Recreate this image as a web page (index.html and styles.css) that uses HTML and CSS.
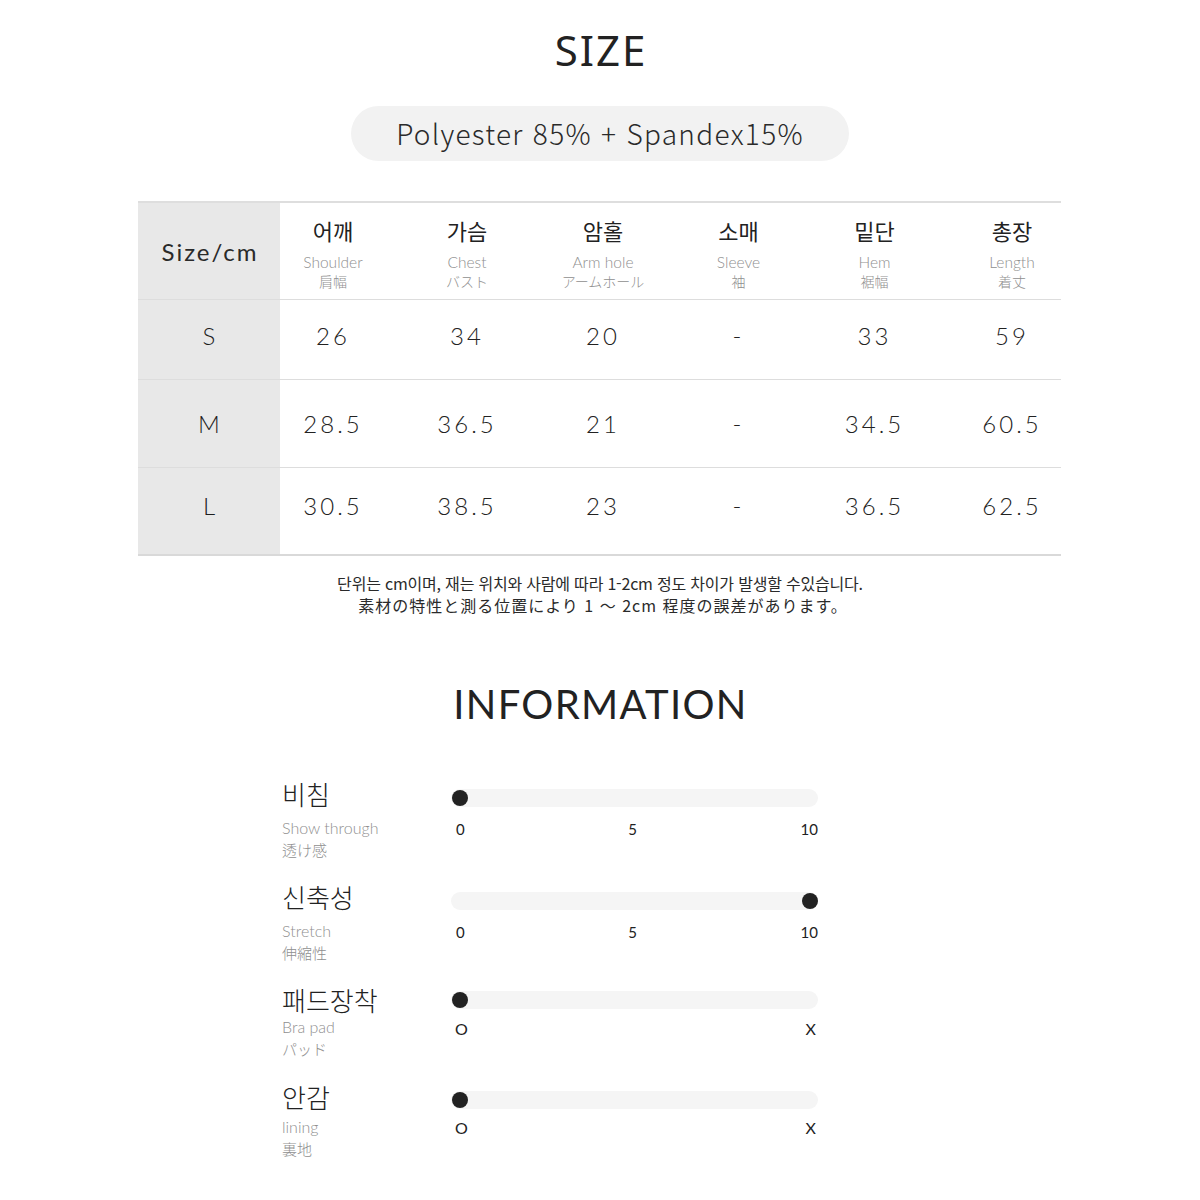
FILE: index.html
```html
<!DOCTYPE html>
<html lang="ko">
<head>
<meta charset="utf-8">
<title>SIZE</title>
<link rel="stylesheet" href="styles.css">
</head>
<body>
<main class="page">
  <section class="size">
    <h1 class="title-size">SIZE</h1>
    <div class="pill-wrap"><div class="pill">Polyester 85% + Spandex15%</div></div>

    <div class="table">
      <div class="row row-head">
        <div class="cell cell-label"><span class="size-cm">Size/cm</span></div>
        <div class="cell head c1"><span class="kr">어깨</span><span class="en">Shoulder</span><span class="jp">肩幅</span></div>
        <div class="cell head"><span class="kr">가슴</span><span class="en">Chest</span><span class="jp">バスト</span></div>
        <div class="cell head"><span class="kr">암홀</span><span class="en">Arm hole</span><span class="jp">アームホール</span></div>
        <div class="cell head"><span class="kr">소매</span><span class="en">Sleeve</span><span class="jp">袖</span></div>
        <div class="cell head"><span class="kr">밑단</span><span class="en">Hem</span><span class="jp">裾幅</span></div>
        <div class="cell head c6"><span class="kr">총장</span><span class="en">Length</span><span class="jp">着丈</span></div>
      </div>
      <div class="row row-s">
        <div class="cell cell-label"><span class="sz">S</span></div>
        <div class="cell num c1">26</div>
        <div class="cell num">34</div>
        <div class="cell num">20</div>
        <div class="cell num">-</div>
        <div class="cell num">33</div>
        <div class="cell num c6">59</div>
      </div>
      <div class="row row-m">
        <div class="cell cell-label"><span class="sz">M</span></div>
        <div class="cell num c1">28.5</div>
        <div class="cell num">36.5</div>
        <div class="cell num">21</div>
        <div class="cell num">-</div>
        <div class="cell num">34.5</div>
        <div class="cell num c6">60.5</div>
      </div>
      <div class="row row-l">
        <div class="cell cell-label"><span class="sz">L</span></div>
        <div class="cell num c1">30.5</div>
        <div class="cell num">38.5</div>
        <div class="cell num">23</div>
        <div class="cell num">-</div>
        <div class="cell num">36.5</div>
        <div class="cell num c6">62.5</div>
      </div>
    </div>

    <p class="note"><span class="note-kr">단위는 cm이며, 재는 위치와 사람에 따라 1-2cm 정도 차이가 발생할 수있습니다.</span><span class="note-jp">素材の特性と測る位置により 1 〜 2cm 程度の誤差があります。</span></p>
  </section>

  <section class="info">
    <h2 class="title-info">INFORMATION</h2>

    <div class="info-list">
      <div class="info-row r1">
        <div class="labels"><span class="kr">비침</span><span class="en">Show through</span><span class="jp">透け感</span></div>
        <div class="meter">
          <div class="bar"><span class="dot" style="--p:0"></span></div>
          <div class="scale"><span>0</span><span>5</span><span>10</span></div>
        </div>
      </div>
      <div class="info-row r2">
        <div class="labels"><span class="kr">신축성</span><span class="en">Stretch</span><span class="jp">伸縮性</span></div>
        <div class="meter">
          <div class="bar"><span class="dot" style="--p:1"></span></div>
          <div class="scale"><span>0</span><span>5</span><span>10</span></div>
        </div>
      </div>
      <div class="info-row r3">
        <div class="labels"><span class="kr">패드장착</span><span class="en">Bra pad</span><span class="jp">パッド</span></div>
        <div class="meter">
          <div class="bar"><span class="dot" style="--p:0"></span></div>
          <div class="scale ox"><span>O</span><span>X</span></div>
        </div>
      </div>
      <div class="info-row r4">
        <div class="labels"><span class="kr">안감</span><span class="en">lining</span><span class="jp">裏地</span></div>
        <div class="meter">
          <div class="bar"><span class="dot" style="--p:0"></span></div>
          <div class="scale ox"><span>O</span><span>X</span></div>
        </div>
      </div>
    </div>
  </section>
</main>
</body>
</html>
```

FILE: styles.css
```css
* { box-sizing: border-box; }
html, body { margin: 0; padding: 0; background: #fff; }
body {
  width: 1200px;
  font-family: "Noto Sans CJK KR", "Noto Sans", sans-serif;
  color: #222;
}

.page { display: flex; flex-direction: column; }

/* SIZE */
.size { padding-top: 25px; display: flex; flex-direction: column; align-items: center; }
.title-size {
  margin: 0;
  font-family: "Noto Sans", sans-serif;
  font-weight: 400;
  font-size: 42px;
  line-height: 50px;
  letter-spacing: 2px;
  padding-left: 2px;
  color: #222;
}
.pill-wrap { margin-top: 31px; display: flex; justify-content: center; }
.pill {
  width: 498px;
  height: 55px;
  border-radius: 28px;
  background: #f2f2f2;
  display: flex; align-items: center; justify-content: center;
  font-family: "Noto Sans CJK KR", sans-serif;
  font-weight: 300;
  font-size: 28px;
  color: #2a2a2a;
  letter-spacing: 1.3px;
  padding-bottom: 2px;
}

.table {
  margin-top: 40px;
  align-self: flex-start;
  margin-left: 138px;
  width: 923px;
  border-top: 2px solid #dedede;
  border-bottom: 2px solid #d9d9d9;
}
.row {
  display: grid;
  grid-template-columns: 142px 119px 136px 136px 135px 137px 118px;
  border-bottom: 1px solid #dddddd;
}
.row-head { height: 97px; }
.row-s { height: 80px; }
.row-m { height: 88px; }
.row-l { height: 86px; border-bottom: 0; }

.cell { display: flex; align-items: center; justify-content: center; }
.cell-label { background: #e8e8e8; }
.c1 { padding-right: 13px; }
.c6 { padding-left: 20px; }

.size-cm {
  font-family: "Lato", sans-serif;
  font-weight: 400;
  font-size: 24px;
  letter-spacing: 2px;
  padding-left: 2px;
  color: #2a2a2a;
}
.sz {
  font-family: "Lato", sans-serif;
  font-weight: 300;
  font-size: 24px;
  color: #1e1e1e;
}

.head { flex-direction: column; padding-top: 2px; }
.head .kr { font-size: 22px; line-height: 32px; color: #222; }
.head .en { font-family: "Lato", sans-serif; font-weight: 300; font-size: 15.5px; line-height: 20px; margin-top: 6px; color: #8f8f8f; }
.head .jp { font-family: "Noto Sans CJK JP", sans-serif; font-weight: 300; font-size: 14px; line-height: 18px; color: #8f8f8f; }

.num {
  font-family: "Lato", sans-serif;
  font-weight: 300;
  font-size: 24px;
  letter-spacing: 3px;
  color: #222;
}
.row-s .cell { padding-bottom: 9px; }
.row-l .cell { padding-bottom: 12px; }

.note {
  margin: 16px 0 0;
  display: flex;
  flex-direction: column;
  align-items: center;
  text-align: center;
  font-family: "Noto Sans CJK KR", sans-serif;
  font-size: 16px;
  line-height: 22px;
  color: #2a2a2a;
}
.note-kr { letter-spacing: -0.2px; }
.note-jp { font-family: "Noto Sans CJK JP", sans-serif; letter-spacing: 1px; padding-left: 6px; }

/* INFORMATION */
.info { margin-top: 63px; display: flex; flex-direction: column; align-items: center; }
.title-info {
  margin: 0;
  font-family: "Lato", sans-serif;
  font-weight: 400;
  font-size: 40px;
  line-height: 50px;
  letter-spacing: 1.3px;
  padding-left: 1px;
  color: #222;
}
.info-list {
  margin-top: 49px;
  align-self: flex-start;
  margin-left: 282px;
  width: 536px;
  display: flex;
  flex-direction: column;
}
.info-row {
  display: grid;
  grid-template-columns: 169px 367px;
  height: 103px;
}
.info-row.r3 { height: 97px; }

.labels { display: flex; flex-direction: column; }
.labels .kr { font-size: 26px; font-weight: 300; line-height: 32px; color: #222; }
.labels .en { font-family: "Lato", sans-serif; font-weight: 300; font-size: 16px; line-height: 22px; margin-top: 7px; color: #8f8f8f; }
.labels .jp { font-family: "Noto Sans CJK JP", sans-serif; font-weight: 300; font-size: 15px; line-height: 22px; color: #8f8f8f; }
.r3 .labels .en { margin-top: 0; }
.r4 .labels .en { margin-top: 3px; }

.meter { display: flex; flex-direction: column; }
.bar {
  position: relative;
  margin-top: 11px;
  height: 18px;
  border-radius: 9px;
  background: #f5f5f5;
}
.r3 .bar { margin-top: 7px; }
.r4 .bar { margin-top: 10px; }
.dot {
  position: absolute;
  top: 1px;
  left: calc(var(--p) * (100% - 17px) + 1px);
  width: 16px;
  height: 16px;
  border-radius: 50%;
  background: #222;
}
.scale {
  margin-top: 12px;
  display: flex;
  justify-content: space-between;
  padding-left: 5px;
  font-family: "Lato", sans-serif;
  font-size: 15px;
  line-height: 20px;
  color: #222;
}
.r3 .scale { margin-top: 10px; }
.r4 .scale { margin-top: 9px; }
.scale.ox { font-size: 16px; padding-left: 4px; padding-right: 2px; }
```
